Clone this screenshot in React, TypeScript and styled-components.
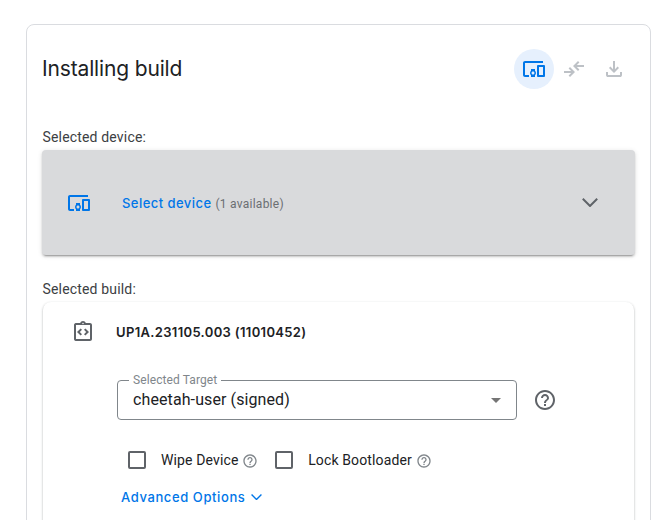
import React from "react";
import styled, { createGlobalStyle } from "styled-components";
import { MdDevicesOther, MdOutlineIntegrationInstructions, MdHelpOutline, MdArrowDropDown } from "react-icons/md";

const GlobalStyle = createGlobalStyle`
  * { box-sizing: border-box; }
  body { margin: 0; background: #fff; font-family: Roboto, sans-serif; color: #202124; }
  svg { display: block; flex: none; }
`;

const Page = styled.main`
  height: 520px;
  padding: 24px 19px 0 26px;
  overflow: hidden;
`;

const Card = styled.section`
  height: 560px;
  padding: 24px 15px;
  border: 1px solid #dadce0;
  border-radius: 8px;
`;

const Header = styled.header`
  display: flex;
  align-items: center;
  justify-content: space-between;
  height: 40px;
  margin-bottom: 38px;
  padding-right: 1px;
`;

const Title = styled.h1`
  margin: 0;
  font: 400 21px/28px Inter, sans-serif;
  letter-spacing: -0.15px;
  white-space: nowrap;
`;

const Steps = styled.div`
  display: flex;
`;

const Step = styled.span<{ $active?: boolean }>`
  display: grid;
  place-items: center;
  width: 40px;
  height: 40px;
  border-radius: 50%;
  color: ${(p) => (p.$active ? "#0076e8" : "#bdc1c6")};
  background: ${(p) => (p.$active ? "#e6f0fd" : "transparent")};
`;

const SectionLabel = styled.div`
  height: 23px;
  padding-left: 0.5px;
  font-size: 14px;
  line-height: 20px;
  letter-spacing: 0.17px;
  color: #3c4043;
  white-space: nowrap;
`;

const Panel = styled.div`
  border-radius: 4px;
  box-shadow: 0 3px 1px -2px rgba(0, 0, 0, 0.2), 0 2px 2px rgba(0, 0, 0, 0.14), 0 1px 5px rgba(0, 0, 0, 0.12);
`;

const DevicePanel = styled(Panel)`
  display: flex;
  align-items: center;
  height: 105px;
  margin-bottom: 24px;
  padding: 0 37px 0 25px;
  background: #d9dadc;
`;

const SelectDevice = styled.span`
  margin-left: 31px;
  font: 500 13px/20px Inter, sans-serif;
  letter-spacing: 0.45px;
  color: #0076e8;
`;

const Available = styled.span`
  flex: 1;
  margin: 2px 0 0 4px;
  font-size: 12px;
  line-height: 20px;
  letter-spacing: 0.25px;
  color: #6b6e72;
`;

const BuildPanel = styled(Panel)`
  height: 300px;
  margin: 0 1px;
  padding: 18px 24px 0 28px;
  border-radius: 8px;
  box-shadow: 0 1px 2px rgba(60, 64, 67, 0.3), 0 1px 3px rgba(60, 64, 67, 0.15);
`;

const BuildHeading = styled.div`
  display: flex;
  align-items: center;
  gap: 21px;
  height: 24px;
  color: #5f6368;
`;

const BuildName = styled.strong`
  font: 600 13px/20px Inter, sans-serif;
  letter-spacing: 0.34px;
  color: #202124;
`;

const Options = styled.div`
  padding-left: 46px;
`;

const TargetRow = styled.div`
  display: flex;
  align-items: center;
  gap: 16px;
  margin-top: 36px;
  color: #5f6368;
`;

const SelectField = styled.div`
  position: relative;
  display: flex;
  align-items: center;
  justify-content: space-between;
  width: 400px;
  height: 40px;
  padding: 0 8px 1px 15px;
  border: 1px solid #80868b;
  border-radius: 4px;
  font-size: 16px;
  letter-spacing: 0.1px;
  color: #202124;
`;

const FieldLabel = styled.span`
  position: absolute;
  top: -8px;
  left: 11px;
  padding: 0 4px;
  background: #fff;
  font-size: 12px;
  line-height: 14px;
  letter-spacing: 0.1px;
  color: #80868b;
`;

const CheckRow = styled.div`
  display: flex;
  align-items: center;
  height: 20px;
  margin: 30px 0 0 11px;
`;

const CheckItem = styled.label`
  display: flex;
  align-items: center;
  font-size: 14px;
  line-height: 20px;
  letter-spacing: 0.13px;
  color: #202124;
  & + & { margin-left: 17px; }
`;

const Box = styled.span`
  width: 18px;
  height: 18px;
  margin-right: 15px;
  border: 2px solid #5f6368;
  border-radius: 2px;
`;

const Hint = styled.span`
  margin: 2px 0 0 3.7px;
  color: #80868b;
`;

const Advanced = styled.div`
  display: flex;
  align-items: center;
  gap: 6px;
  height: 20px;
  margin: 17px 0 0 4px;
  font: 500 13px/20px Inter, sans-serif;
  letter-spacing: 0.6px;
  color: #0076e8;
`;

const Chevron = ({ size, color }: { size: number; color: string }) => (
  <svg width={size} height={size * 9 / 16} viewBox="0 0 16 9" fill="none" stroke={color} strokeWidth="2">
    <path d="M.8.8 8 8l7.2-7.2" />
  </svg>
);

const CompareIcon = () => (
  <svg width="24" height="24" viewBox="0 0 24 24" fill="currentColor">
    <path d="m8 20-1.4-1.4L9.175 16H2v-2h7.175L6.6 11.4 8 10l5 5Zm8-6-5-5 5-5 1.4 1.4L14.825 8H22v2h-7.175l2.575 2.6Z" />
  </svg>
);

const DownloadIcon = () => (
  <svg width="24" height="24" viewBox="0 0 24 24" fill="currentColor">
    <path d="m12 16-5-5 1.4-1.45 2.6 2.6V4h2v8.15l2.6-2.6L17 11ZM6 20q-.825 0-1.412-.587Q4 18.825 4 18v-3h2v3h12v-3h2v3q0 .825-.587 1.413Q18.825 20 18 20Z" />
  </svg>
);

const CheckOption = ({ label }: { label: string }) => (
  <CheckItem>
    <Box />
    {label}
    <Hint><MdHelpOutline size={16} /></Hint>
  </CheckItem>
);

export default function App() {
  return (
    <>
      <GlobalStyle />
      <Page>
        <Card>
          <Header>
            <Title>Installing build</Title>
            <Steps>
              <Step $active><MdDevicesOther size={24} /></Step>
              <Step><CompareIcon /></Step>
              <Step><DownloadIcon /></Step>
            </Steps>
          </Header>
          <SectionLabel>Selected device:</SectionLabel>
          <DevicePanel>
            <MdDevicesOther size={24} color="#0076e8" />
            <SelectDevice>Select device</SelectDevice>
            <Available>(1 available)</Available>
            <Chevron size={16} color="#5f6368" />
          </DevicePanel>
          <SectionLabel>Selected build:</SectionLabel>
          <BuildPanel>
            <BuildHeading>
              <MdOutlineIntegrationInstructions size={24} />
              <BuildName>UP1A.231105.003 (11010452)</BuildName>
            </BuildHeading>
            <Options>
              <TargetRow>
                <SelectField>
                  <FieldLabel>Selected Target</FieldLabel>
                  cheetah-user (signed)
                  <MdArrowDropDown size={24} color="#757575" />
                </SelectField>
                <MdHelpOutline size={24} />
              </TargetRow>
              <CheckRow>
                <CheckOption label="Wipe Device" />
                <CheckOption label="Lock Bootloader" />
              </CheckRow>
              <Advanced>
                Advanced Options
                <Chevron size={11} color="#0076e8" />
              </Advanced>
            </Options>
          </BuildPanel>
        </Card>
      </Page>
    </>
  );
}
